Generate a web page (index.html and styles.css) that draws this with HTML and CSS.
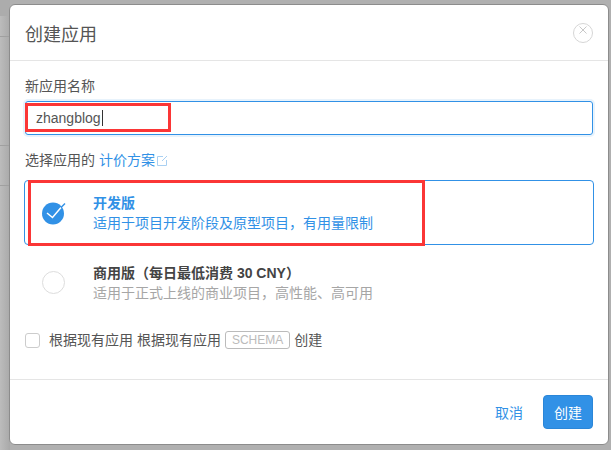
FILE: index.html
```html
<!DOCTYPE html>
<html lang="zh-CN">
<head>
    <meta charset="UTF-8">
    <meta name="viewport" content="width=device-width, initial-scale=1.0">
    <title>创建应用</title>
    <link rel="stylesheet" href="styles.css">
</head>
<body>
    <div class="backdrop">
        <div class="shade"></div>
        <div class="rule rule-1"></div>
        <div class="rule rule-2"></div>
        <div class="rule rule-3"></div>
    </div>

    <div class="modal">
        <div class="modal-header">
            <h2>创建应用</h2>
            <span class="close">
                <svg width="20" height="20" viewBox="0 0 20 20">
                    <circle cx="10" cy="10" r="9.5" fill="none" stroke="#d6d6d6"/>
                    <path d="M6.5 3.5l7 7M13.500 3.500l-7 7" fill="none" stroke="#c8c8c8"/>
                </svg>
            </span>
        </div>

        <div class="modal-body">
            <label class="field-label">新应用名称</label>
            <div class="name-input">zhangblog<span class="caret"></span></div>

            <p class="plan-label">选择应用的<a href="#">计价方案</a>
                <svg class="ext" width="11" height="11" viewBox="0 0 11 11">
                    <path d="M6 1.500H.5v9h9V5M5 6l5-5" fill="none" stroke="#a9d0f2"/>
                </svg>
            </p>

            <div class="plan plan-active">
                <span class="radio">
                    <svg width="24" height="24" viewBox="0 0 24 24">
                        <circle cx="11" cy="12.500" r="11" fill="#3191e6"/>
                        <path d="M5 12l5.500 4.500 8.500-10" fill="none" stroke="#fff" stroke-width="1.500"/>
                        <path d="M19 6.500l4-4" fill="none" stroke="#3191e6" stroke-width="1.500"/>
                    </svg>
                </span>
                <div>
                    <h3>开发版</h3>
                    <p>适用于项目开发阶段及原型项目，有用量限制</p>
                </div>
            </div>

            <div class="plan">
                <span class="radio radio-off"></span>
                <div>
                    <h3>商用版（每日最低消费 30 CNY）</h3>
                    <p>适用于正式上线的商业项目，高性能、高可用</p>
                </div>
            </div>

            <div class="from-existing">
                <span class="checkbox"></span>
                <span>根据现有应用 根据现有应用</span>
                <span class="tag">SCHEMA</span>
                <span>创建</span>
            </div>
        </div>

        <div class="modal-footer">
            <a class="cancel" href="#">取消</a>
            <button class="create">创建</button>
        </div>
    </div>

    <div class="mark mark-input"></div>
    <div class="mark mark-plan"></div>
</body>
</html>
```

FILE: styles.css
```css
* {
    box-sizing: border-box;
}
html, body {
    height: 100%;
}
body {
    margin: 0;
    padding: 4px 2px 5px 9px;
    overflow: hidden;
    font-family: 'Liberation Sans', 'Noto Sans CJK SC', sans-serif;
    font-size: 14px;
    color: #555555;
    background-color: #b0b0b0;
}
a {
    color: #3191e6;
    text-decoration: none;
}
.backdrop {
    position: absolute;
    top: 0;
    left: 0;
    width: 10px;
    height: 100%;
    background: linear-gradient(to right, #bcbcbc, #a9a9a9);
}
.shade {
    height: 16px;
    background-color: #acacac;
}
.rule {
    position: absolute;
    left: 0;
    width: 10px;
    height: 1px;
    background-color: #a0a0a0;
}
.rule-1 {
    top: 36px;
}
.rule-2 {
    top: 145px;
}
.rule-3 {
    top: 185px;
}
.modal {
    position: relative;
    display: flex;
    flex-direction: column;
    height: 441px;
    background-color: #ffffff;
    border: 1px solid #8c8c8c;
    border-radius: 6px;
}
.modal-header {
    display: flex;
    justify-content: space-between;
    align-items: center;
    flex: none;
    height: 56px;
    padding: 0 15px;
    border-bottom: 1px solid #e5e5e5;
}
.modal-header h2 {
    margin: 0;
    font-size: 18px;
    font-weight: normal;
    color: #555555;
}
.close {
    display: flex;
    margin-top: 1px;
}
.modal-body {
    flex: 1;
    padding: 15px 15px 0;
}
.field-label {
    display: block;
    line-height: 20px;
}
.name-input {
    display: flex;
    align-items: center;
    height: 34px;
    margin-top: 5px;
    padding-left: 10px;
    border: 1px solid #3191e6;
    border-radius: 3px;
    box-shadow: 0 0 0 2px #e8f3fc;
}
.caret {
    width: 1px;
    height: 16px;
    margin-left: 1px;
    background-color: #333333;
}
.plan-label {
    display: flex;
    align-items: center;
    margin: 15px 0 10px;
    line-height: 20px;
}
.plan-label a {
    margin-left: 4px;
}
.ext {
    margin-left: 2px;
}
.plan {
    display: flex;
    align-items: center;
    height: 65px;
    margin: 0 -1px 5px;
    border: 1px solid transparent;
    border-radius: 4px;
}
.plan-active {
    border-color: #3191e6;
}
.plan h3 {
    margin: 0;
    font-size: 14px;
    font-weight: bold;
    line-height: 20px;
    color: #444444;
}
.plan p {
    margin: 0;
    line-height: 20px;
    color: #a6a6a6;
}
.plan-active h3, .plan-active p {
    color: #3191e6;
}
.radio {
    flex: none;
    display: flex;
    width: 24px;
    height: 24px;
    margin-left: 17px;
    margin-right: 27px;
}
.radio-off {
    width: 23px;
    height: 23px;
    margin-right: 28px;
    border: 1px solid #dddddd;
    border-radius: 50%;
}
.from-existing {
    display: flex;
    align-items: center;
    margin-top: 15px;
    line-height: 20px;
}
.checkbox {
    width: 15px;
    height: 15px;
    margin-right: 9px;
    border: 1px solid #cccccc;
    border-radius: 3px;
}
.tag {
    margin: 0 4px;
    padding: 0 6px;
    height: 18px;
    font-size: 12px;
    line-height: 16px;
    color: #bbbbbb;
    border: 1px solid #bbbbbb;
    border-radius: 3px;
}
.modal-footer {
    display: flex;
    justify-content: flex-end;
    align-items: center;
    flex: none;
    height: 65px;
    padding-right: 15px;
    border-top: 1px solid #e5e5e5;
}
.cancel {
    margin-right: 20px;
}
.create {
    width: 50px;
    height: 34px;
    padding: 0;
    font-family: inherit;
    font-size: 14px;
    color: #ffffff;
    background-color: #3191e6;
    border: 1px solid #2a86d8;
    border-radius: 4px;
}
/* red boxes drawn over the screenshot */
.mark {
    position: absolute;
    border: 3px solid #fb3636;
}
.mark-input {
    left: 25px;
    top: 103px;
    width: 146px;
    height: 29px;
}
.mark-plan {
    left: 28px;
    top: 180px;
    width: 397px;
    height: 66px;
}
```
